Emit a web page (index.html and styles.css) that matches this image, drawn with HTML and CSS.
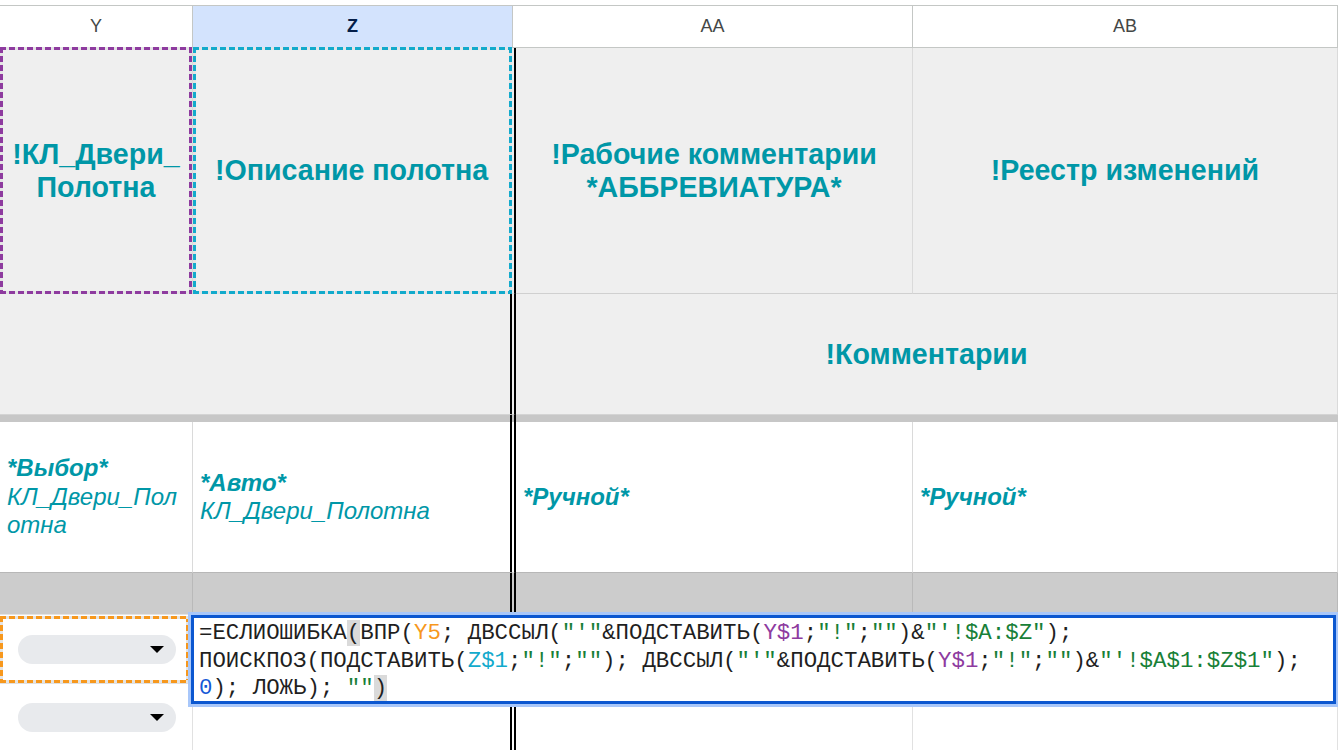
FILE: index.html
```html
<!DOCTYPE html>
<html lang="ru">
<head>
    <meta charset="UTF-8">
    <meta name="viewport" content="width=device-width, initial-scale=1.0">
    <title>Двери — полотна</title>
    <link rel="stylesheet" href="styles.css">
</head>
<body>
    <div class="sheet">
        <div class="col-heads">
            <div class="col-head">Y</div>
            <div class="col-head col-head-active">Z</div>
            <div class="col-head">AA</div>
            <div class="col-head">AB</div>
        </div>

        <div class="grid">
            <!-- row 1: column titles -->
            <div class="cell title-cell narrow marked mark-purple">!КЛ_Двери_Полотна</div>
            <div class="cell title-cell frozen-edge marked mark-cyan">!Описание полотна</div>
            <div class="cell title-cell">!Рабочие комментарии *АББРЕВИАТУРА*</div>
            <div class="cell title-cell">!Реестр изменений</div>

            <!-- row 2: groups -->
            <div class="cell group-cell frozen-edge span-2"></div>
            <div class="cell group-cell title-cell span-2">!Комментарии</div>

            <!-- frozen rows divider -->
            <div class="freeze-bar frozen-edge span-2"></div>
            <div class="freeze-bar span-2"></div>

            <!-- row 3: fill type -->
            <div class="cell type-cell narrow"><p><b>*Выбор*</b><br>КЛ_Двери_Полотна</p></div>
            <div class="cell type-cell frozen-edge"><p><b>*Авто*</b><br>КЛ_Двери_Полотна</p></div>
            <div class="cell type-cell"><p><b>*Ручной*</b></p></div>
            <div class="cell type-cell"><p><b>*Ручной*</b></p></div>

            <!-- row 4: band -->
            <div class="cell band-cell"></div>
            <div class="cell band-cell frozen-edge"></div>
            <div class="cell band-cell"></div>
            <div class="cell band-cell"></div>

            <!-- rows 5-6: data -->
            <div class="cell data-cell marked mark-orange"><div class="chip"><span class="chip-arrow"></span></div></div>
            <div class="cell data-cell frozen-edge"></div>
            <div class="cell data-cell"></div>
            <div class="cell data-cell"></div>

            <div class="cell data-cell"><div class="chip"><span class="chip-arrow"></span></div></div>
            <div class="cell data-cell frozen-edge"></div>
            <div class="cell data-cell"></div>
            <div class="cell data-cell"></div>
        </div>

        <div class="formula-editor">=ЕСЛИОШИБКА<span class="paren-match">(</span>ВПР(<span class="ref-orange">Y5</span>; ДВССЫЛ(<span class="str">"'"</span>&amp;ПОДСТАВИТЬ(<span class="ref-purple">Y$1</span>;<span class="str">"!"</span>;<span class="str">""</span>)&amp;<span class="str">"'!$A:$Z"</span>); ПОИСКПОЗ(ПОДСТАВИТЬ(<span class="ref-cyan">Z$1</span>;<span class="str">"!"</span>;<span class="str">""</span>); ДВССЫЛ(<span class="str">"'"</span>&amp;ПОДСТАВИТЬ(<span class="ref-purple">Y$1</span>;<span class="str">"!"</span>;<span class="str">""</span>)&amp;<span class="str">"'!$A$1:$Z$1"</span>); <span class="num">0</span>); ЛОЖЬ); <span class="str">""</span><span class="paren-match">)</span></div>
    </div>
</body>
</html>
```

FILE: styles.css
```css
* {
    box-sizing: border-box;
}
body {
    margin: 0;
    font-family: "Liberation Sans", Arial, sans-serif;
    background: #fff;
}
.sheet {
    position: relative;
    width: 1338px;
    height: 750px;
    padding-top: 5px;
    overflow: hidden;
}

/* column letters */
.col-heads {
    display: grid;
    grid-template-columns: 193px 320px 400px 425px;
    height: 43px;
    border-top: 1px solid #c4c7c5;
    border-bottom: 1px solid #c4c7c5;
}
.col-head {
    display: flex;
    align-items: center;
    justify-content: center;
    border-right: 1px solid #c4c7c5;
    font-size: 18px;
    color: #444746;
}
.col-head-active {
    background: #d3e3fd;
    color: #041e49;
    font-weight: 700;
}

/* cells */
.grid {
    display: grid;
    grid-template-columns: 193px 323px 397px 425px;
    grid-template-rows: 246px 120px 8px 151px 42px 69px 67px;
}
.cell {
    position: relative;
    border-right: 1px solid #dadada;
    border-bottom: 1px solid #dadada;
    color: #0097a7;
}
.span-2 {
    grid-column: span 2;
}
.narrow {
    word-break: break-all;
}
.title-cell {
    display: flex;
    align-items: center;
    justify-content: center;
    padding: 0 4px;
    background: #efefef;
    border-bottom-color: #d0d0d0;
    text-align: center;
    font-size: 28.6px;
    font-weight: 700;
    line-height: 33px;
}
.title-cell.narrow {
    padding: 0 7px;
}
.group-cell {
    background: #efefef;
    border-bottom: none;
}
.freeze-bar {
    background: #c7c7c7;
    border-top: 1px solid #d4d4d4;
}
.type-cell {
    display: flex;
    align-items: center;
    padding: 0 4px 0 7px;
    border-bottom-color: #b7b7b7;
    font-size: 24px;
    font-style: italic;
    line-height: 28.5px;
}
.type-cell p {
    margin: 0;
}
.band-cell {
    background: #cccccc;
    border-right-color: #b9b9b9;
    border-bottom-color: #e4e4e4;
}
.data-cell {
    display: flex;
    align-items: center;
    padding-left: 18px;
    border-right-color: #e1e1e1;
    border-bottom-color: #e1e1e1;
}

/* frozen columns edge */
.grid .frozen-edge {
    border-right: 6px double #000;
}

/* copy marquee around cells */
.marked::after {
    content: "";
    position: absolute;
    inset: -1px 0 -1px 0;
    pointer-events: none;
    background:
        repeating-linear-gradient(90deg, var(--mark) 0 6px, #e4e4e4 6px 9px) top left / 100% 3px no-repeat,
        repeating-linear-gradient(90deg, var(--mark) 0 6px, #e4e4e4 6px 9px) bottom left / 100% 3px no-repeat,
        repeating-linear-gradient(180deg, var(--mark) 0 6px, #e4e4e4 6px 9px) top left / 3px 100% no-repeat,
        repeating-linear-gradient(180deg, var(--mark) 0 6px, #e4e4e4 6px 9px) top right / 3px 100% no-repeat;
}
.mark-purple {
    --mark: #8e3b9f;
}
.mark-cyan {
    --mark: #12aacc;
}
.mark-cyan::after {
    right: -2px;
}
.mark-orange {
    --mark: #f7981d;
}
.mark-orange::after {
    inset: 1px 3px 0 0;
}

/* dropdown chip */
.chip {
    display: flex;
    align-items: center;
    justify-content: flex-end;
    width: 158px;
    height: 29px;
    padding-right: 12px;
    border-radius: 15px;
    background: #e8eaed;
}
.chip-arrow {
    width: 0;
    height: 0;
    border-left: 7px solid transparent;
    border-right: 7px solid transparent;
    border-top: 7px solid #000;
}

/* in-cell formula editor */
.formula-editor {
    position: absolute;
    left: 191px;
    top: 615px;
    width: 1145px;
    height: 89px;
    padding: 2px 4px 0 5px;
    background: #fff;
    border: 3px solid #0b57d0;
    box-shadow: 0 0 0 3px #a8c7fa;
    font-family: "Liberation Mono", "DejaVu Sans Mono", monospace;
    font-size: 22.4px;
    line-height: 27.5px;
    color: #1f1f1f;
}
.paren-match {
    background: #dadada;
}
.ref-orange {
    color: #f7981d;
}
.ref-purple {
    color: #8e3b9f;
}
.ref-cyan {
    color: #12aacc;
}
.str {
    color: #188038;
}
.num {
    color: #1558d6;
}
```
